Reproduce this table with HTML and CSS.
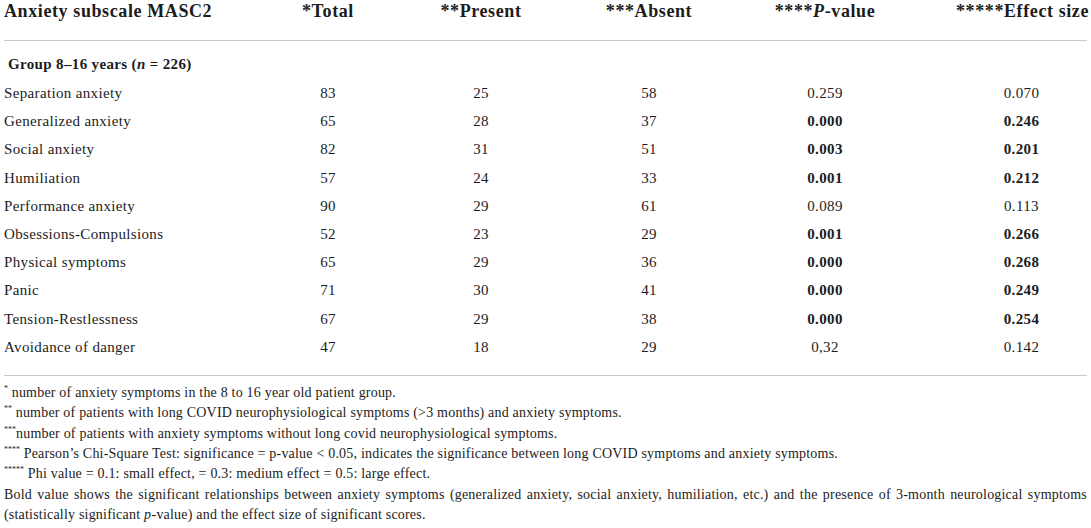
FILE: index.html
```html
<!DOCTYPE html>
<html lang="en">
<head>
<meta charset="utf-8">
<title>Anxiety subscale MASC2</title>
<link rel="stylesheet" href="styles.css">
</head>
<body>
<div class="page">
  <table class="data">
    <colgroup>
      <col class="c1"><col class="c2"><col class="c3"><col class="c4"><col class="c5"><col class="c6">
    </colgroup>
    <thead>
      <tr>
        <th class="lbl">Anxiety subscale MASC2</th>
        <th>*Total</th>
        <th>**Present</th>
        <th>***Absent</th>
        <th>****<i>P</i>-value</th>
        <th class="last">*****Effect size</th>
      </tr>
    </thead>
    <tbody>
      <tr class="group"><td colspan="6"><b>Group 8–16 years (<i>n</i> = 226)</b></td></tr>
      <tr><td class="lbl">Separation anxiety</td><td>83</td><td>25</td><td>58</td><td>0.259</td><td class="last">0.070</td></tr>
      <tr><td class="lbl">Generalized anxiety</td><td>65</td><td>28</td><td>37</td><td><b>0.000</b></td><td class="last"><b>0.246</b></td></tr>
      <tr><td class="lbl">Social anxiety</td><td>82</td><td>31</td><td>51</td><td><b>0.003</b></td><td class="last"><b>0.201</b></td></tr>
      <tr><td class="lbl">Humiliation</td><td>57</td><td>24</td><td>33</td><td><b>0.001</b></td><td class="last"><b>0.212</b></td></tr>
      <tr><td class="lbl">Performance anxiety</td><td>90</td><td>29</td><td>61</td><td>0.089</td><td class="last">0.113</td></tr>
      <tr><td class="lbl">Obsessions-Compulsions</td><td>52</td><td>23</td><td>29</td><td><b>0.001</b></td><td class="last"><b>0.266</b></td></tr>
      <tr><td class="lbl">Physical symptoms</td><td>65</td><td>29</td><td>36</td><td><b>0.000</b></td><td class="last"><b>0.268</b></td></tr>
      <tr><td class="lbl">Panic</td><td>71</td><td>30</td><td>41</td><td><b>0.000</b></td><td class="last"><b>0.249</b></td></tr>
      <tr><td class="lbl">Tension-Restlessness</td><td>67</td><td>29</td><td>38</td><td><b>0.000</b></td><td class="last"><b>0.254</b></td></tr>
      <tr class="end"><td class="lbl">Avoidance of danger</td><td>47</td><td>18</td><td>29</td><td>0,32</td><td class="last">0.142</td></tr>
    </tbody>
  </table>
  <div class="notes">
    <p><sup>*</sup> number of anxiety symptoms in the 8 to 16 year old patient group.</p>
    <p><sup>**</sup> number of patients with long COVID neurophysiological symptoms (&gt;3 months) and anxiety symptoms.</p>
    <p><sup>***</sup>number of patients with anxiety symptoms without long covid neurophysiological symptoms.</p>
    <p><sup>****</sup> Pearson’s Chi-Square Test: significance = p-value &lt; 0.05, indicates the significance between long COVID symptoms and anxiety symptoms.</p>
    <p><sup>*****</sup> Phi value = 0.1: small effect, = 0.3: medium effect = 0.5: large effect.</p>
    <p class="just">Bold value shows the significant relationships between anxiety symptoms (generalized anxiety, social anxiety, humiliation, etc.) and the presence of 3-month neurological symptoms (statistically significant <i>p</i>-value) and the effect size of significant scores.</p>
  </div>
</div>
</body>
</html>
```

FILE: styles.css
```css
html, body {
  margin: 0;
  padding: 0;
  background: #ffffff;
}

body,
.page,
.data,
.data th,
.data td,
.notes {
  font-family: "Liberation Serif", "DejaVu Serif", serif;
}

.page {
  padding: 0 4px;
  color: #1c1c1c;
}

.data {
  width: 1083px;
  border-collapse: collapse;
  table-layout: fixed;
}

.c1 { width: 256px; }
.c2 { width: 136px; }
.c3 { width: 170px; }
.c4 { width: 166px; }
.c5 { width: 186px; }
.c6 { width: 169px; }

.data th {
  font-size: 18px;
  line-height: 22px;
  font-weight: bold;
  letter-spacing: 0.6px;
  text-align: center;
  padding: 0 0 18px 0;
  border-bottom: 1px solid #c9c9c9;
  white-space: nowrap;
}

.data td {
  font-size: 15px;
  line-height: 20.2px;
  letter-spacing: 0.35px;
  text-align: center;
  padding: 4px 0;
  white-space: nowrap;
}

.data th.lbl,
.data td.lbl {
  text-align: left;
}

.data th.last,
.data td.last {
  padding-left: 38px;
}

.data tr.group td {
  text-align: left;
  padding: 13px 0 5px 4px;
  line-height: 20px;
}

.data tr.end td {
  padding-bottom: 18px;
  border-bottom: 1px solid #c9c9c9;
}

.notes {
  margin-top: 7px;
  font-size: 14px;
  line-height: 20.3px;
  letter-spacing: 0.2px;
}

.notes p {
  margin: 0;
}

.notes sup {
  font-size: 8px;
  line-height: 0;
  vertical-align: 6px;
  letter-spacing: 0;
}

.notes .just {
  text-align: justify;
}

.notes .just i {
  letter-spacing: 0.6px;
}
```
